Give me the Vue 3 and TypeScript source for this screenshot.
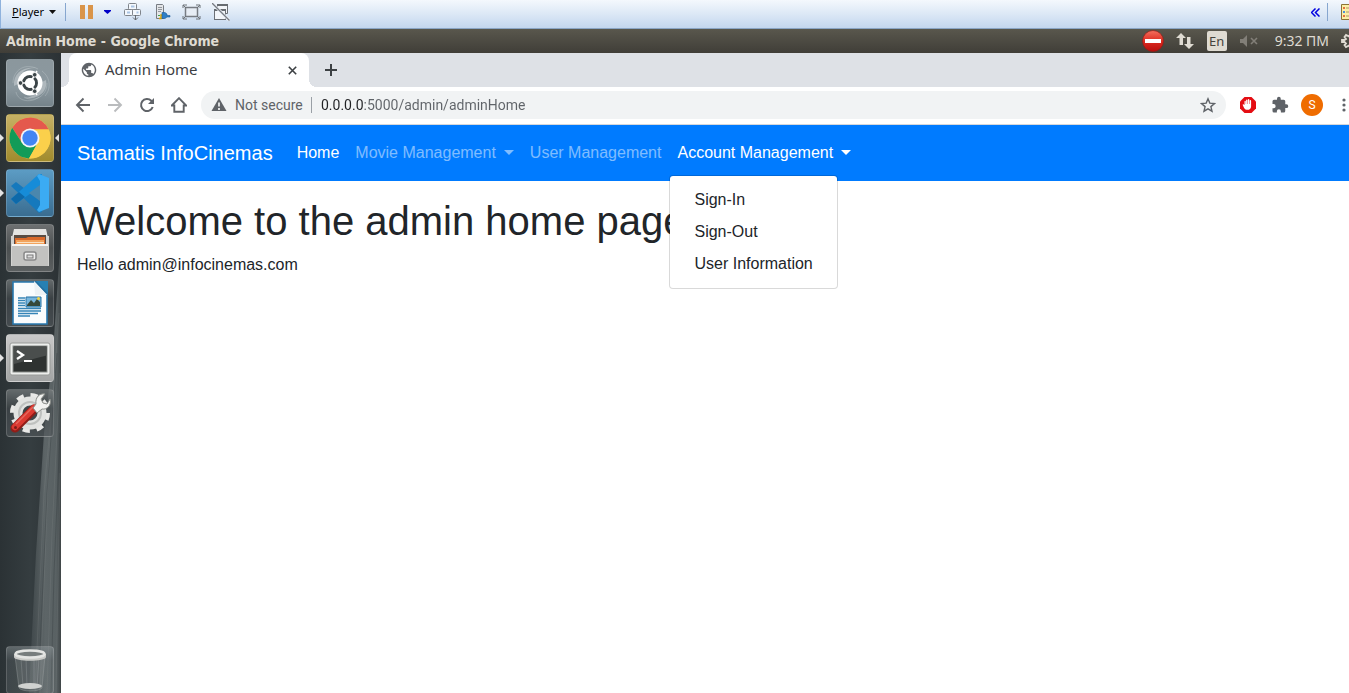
<script setup lang="ts">
import { ref } from 'vue'

interface NavEntry {
  label: string
  caret: boolean
  active: boolean
  menu?: string[]
}

const navEntries: NavEntry[] = [
  { label: 'Home', caret: false, active: true },
  { label: 'Movie Management', caret: true, active: false },
  { label: 'User Management', caret: false, active: false },
  { label: 'Account Management', caret: true, active: true, menu: ['Sign-In', 'Sign-Out', 'User Information'] },
]
const openMenu = ref('Account Management')
const address = ref('0.0.0.0:5000/admin/adminHome')

function toggle(entry: NavEntry) {
  openMenu.value = openMenu.value === entry.label ? '' : entry.label
}
</script>

<template>
  <div class="screen">
    <header class="vm-bar">
      <button class="player"><span><u>P</u>layer</span>
        <svg width="7" height="4" viewBox="0 0 7 4"><path d="M0 0h7L3.500 4z" fill="#111" /></svg>
      </button>
      <i class="vm-sep"></i>
      <button class="vm-btn pause" aria-label="Suspend">
        <svg width="14" height="14" viewBox="0 0 14 14"><path d="M0 0h5v14H0zM8 0h5v14H8z" fill="#d9944a" /></svg>
      </button>
      <button class="vm-btn pause-menu" aria-label="Power options">
        <svg width="7" height="4" viewBox="0 0 7 4"><path d="M0 0h7v1L3.500 4 0 1z" fill="#0000c8" /></svg>
      </button>
      <button class="vm-btn" aria-label="Send keys">
        <svg width="18" height="18" viewBox="0 0 18 18" fill="#f4f8fd" stroke="#7f848b">
          <rect x="4.500" y=".5" width="8" height="6" rx="1" /><rect x=".5" y="6.500" width="8" height="6" rx="1" /><rect x="8.500" y="6.500" width="8" height="6" rx="1" />
          <path d="M7 3.500h3.500M3 9.500h3M12.500 9.500h2" stroke="#a9c4e4" stroke-width="2" />
          <path d="M11.500 12v5M9 14.500l2.500 2.500 2.500-2.500" fill="none" stroke="#666a70" />
        </svg>
      </button>
      <button class="vm-btn" aria-label="Devices">
        <svg width="18" height="18" viewBox="0 0 18 18">
          <path d="M3.500 1.500h6l1 1v13h-7z" fill="#e3e5e8" stroke="#777c83" /><path d="M5 4.500h4M5 6.500h4M5 8.500h3" stroke="#92979d" /><path d="M5 12.500h2" stroke="#3fa34d" />
          <path d="M6 15.500h2v-3.500h3" fill="none" stroke="#d9a400" stroke-width="1.500" /><path d="M9 9.500h3l2 1.500v1.500h3v1.500h-3L12 15.500H9z" fill="#2f7fc6" stroke="#1b5b99" stroke-width=".6" />
        </svg>
      </button>
      <button class="vm-btn" aria-label="Full screen">
        <svg width="19" height="16" viewBox="0 0 19 16" fill="none" stroke="#6d7278">
          <rect x="3.500" y="3.500" width="12" height="9" fill="#e7edf5" stroke="#777c83" stroke-width="1.500" /><path d="M1 4V1h4M1 1l3 3M14 1h4v3M18 1l-3 3M1 12v3h4M1 15l3-3M14 15h4v-3M18 15l-3-3" />
        </svg>
      </button>
      <button class="vm-btn" aria-label="Unity mode">
        <svg width="18" height="18" viewBox="0 0 18 18">
          <path d="M5.500 6V1.500h10v9h-2" fill="#f2f5f9" stroke="#6b6f75" /><path d="M5 2h11" stroke="#666b71" stroke-width="2" />
          <rect x="2.500" y="6.500" width="11" height="10" fill="#f2f5f9" stroke="#6b6f75" /><path d="M2 7h12" stroke="#666b71" stroke-width="2" />
          <path d="M0 0l18 18" stroke="#eef3fa" stroke-width="3" /><path d="M0 0l17.500 17.500" stroke="#777c83" stroke-width="1.300" />
        </svg>
      </button>
      <span class="grow"></span>
      <button class="vm-btn collapse" aria-label="Collapse toolbar">
        <svg width="9" height="9" viewBox="0 0 9 9"><path d="M4.500.5l-4 4 4 4M8.500.5l-4 4 4 4" fill="none" stroke="#0000e0" stroke-width="1.500" /></svg>
      </button>
      <i class="vm-sep"></i>
      <svg class="note" width="8" height="16" viewBox="0 0 8 16"><path d="M.5.5H9v15H.5z" fill="#fbefa6" stroke="#8c7433" /><path d="M2 3h2v2H2z" fill="#e5703c" /><path d="M2 7h2v2H2z" fill="#4b92d6" /><path d="M2 11h2v2H2z" fill="#e5703c" /><path d="M5 4h3M5 8h3M5 12h3" stroke="#a99a67" /></svg>
    </header>

    <div class="title-bar">
      <strong>Admin Home - Google Chrome</strong>
      <span class="grow"></span>
      <svg class="stop" width="22" height="22" viewBox="0 0 22 22">
        <defs><linearGradient id="stopRed" x2="0" y2="1"><stop stop-color="#f4705e" /><stop offset=".5" stop-color="#dc2b20" /><stop offset="1" stop-color="#b90d0d" /></linearGradient></defs>
        <circle cx="11" cy="11" r="10.500" fill="url(#stopRed)" stroke="#8f1c15" stroke-width=".7" /><path d="M3 9h16v4H3z" fill="#fff" />
      </svg>
      <svg class="net" width="18" height="18" viewBox="0 0 18 18" fill="#dfdbd2"><path d="M5 1l5 5H7v7H3.500V6H0zM13 17l-5-5h3V5h3.500v7H18z" /></svg>
      <span class="lang">En</span>
      <svg class="mute" width="18" height="12" viewBox="0 0 18 12"><path d="M0 4h3l4-4v12L3 8H0z" fill="#827f78" /><path d="M11 3l6 6M17 3l-6 6" stroke="#827f78" stroke-width="1.600" /></svg>
      <time>9:32 ΠΜ</time>
      <svg class="gear" width="8" height="16" viewBox="0 0 8 16"><path d="M9 1.500l-1 2-3-1.500-1.500 2L5 6 3.500 7H1v2h2.500L5 10.500 3.500 12 5 14l3-1.500 1 2" fill="none" stroke="#dfdbd2" stroke-width="1.800" /></svg>
    </div>

    <div class="desktop">
      <nav class="launcher" aria-label="Launcher">
        <svg class="wallpaper" viewBox="0 0 61 640" preserveAspectRatio="none">
          <defs>
            <linearGradient id="streak"><stop stop-color="#4a5255" stop-opacity=".5" /><stop offset=".5" stop-color="#5d6567" /><stop offset=".85" stop-color="#596163" /><stop offset="1" stop-color="#3f4547" /></linearGradient>
          </defs>
          <path d="M61 180L53 300 44 380 36 500 29 640H61z" fill="url(#streak)" />
          <path d="M59 260L49 400 40 640M60 320L52 480 47 640M60 420L56 640M55 320L44 440 35 640" fill="none" stroke="#8a9193" stroke-opacity=".2" />
          <path d="M57 300L47 440 38 640M60 380L54 520 51 640" fill="none" stroke="#2e3437" stroke-opacity=".3" />
        </svg>
        <button class="tile dash" aria-label="Search your computer">
          <svg viewBox="0 0 48 48">
            <g fill="none" stroke="#c5cdd1" stroke-opacity=".35"><path d="M7 24C7 12 18 3 32 10M41 24c0 13-12 20-23 14M10 33C12 43 26 44 33 38M36 12c9 7 9 18 3 25" /></g>
            <path d="M8 27C7 14 17 7 31 9 19 8 12 15 12 25zM40 21c2 13-9 20-22 18 11-1 18-7 18-16z" fill="#dbe0e2" opacity=".45" />
            <circle cx="24" cy="24" r="12.500" fill="#fff" /><circle cx="24" cy="24" r="6.500" fill="none" stroke="#3c4548" stroke-width="3" />
            <path d="M24 24L12 24M24 24l7-12M24 24l7 12" stroke="#fff" stroke-width="1.500" />
            <g fill="#3c4548" stroke="#fff" stroke-width=".8"><circle cx="14.500" cy="24" r="2.300" /><circle cx="28.700" cy="15.800" r="2.300" /><circle cx="28.700" cy="32.200" r="2.300" /></g><circle cx="24" cy="24" r="4.800" fill="#fff" />
          </svg>
        </button>
        <button class="tile chrome running focused" aria-label="Google Chrome">
          <svg viewBox="0 0 48 48">
            <circle cx="24" cy="24" r="20.500" fill="#fbd04b" />
            <path d="M6.200 13.800A20.500 20.500 0 0 1 42.700 15.500H24L15.500 28z" fill="#e4594d" /><path d="M6.200 13.800A20.500 20.500 0 0 0 23 44.500l9-15.500-8 4-8.500-5z" fill="#129b58" />
            <path d="M24 15.500h18.700A20.500 20.500 0 0 1 23 44.500L31.500 29z" fill="#fbd04b" />
            <circle cx="24" cy="24" r="9.500" fill="#f5f5f5" /><circle cx="24" cy="24" r="7.700" fill="#4285f4" />
          </svg>
        </button>
        <button class="tile code running" aria-label="Visual Studio Code">
          <svg viewBox="0 0 48 48">
            <path d="M5 17l5-4 26 20v10l-3 1z" fill="#1579bd" /><path d="M5 30l5 5 26-19V5h-3z" fill="#168cd8" /><path d="M33 5l10 4v30l-10 4-2-2 3-5V12l-3-5z" fill="#3babf3" /><path d="M34 16v16L23 24z" fill="#4a87ad" /><path d="M5 30l5 5 9-7-6-5z" fill="#0e69a9" />
          </svg>
        </button>
        <button class="tile files" aria-label="Files">
          <svg viewBox="0 0 48 48">
            <path d="M8 5h32l3 13H5z" fill="#e4e4e2" /><path d="M5 12h38v30H5z" fill="#d2d2d0" /><path d="M8 11h32v9H8z" fill="#594c43" />
            <path d="M9 14h11l2-1h17v8H9z" fill="#d96a2b" /><path d="M10 16h28v5H10z" fill="#f2a35c" /><path d="M11 18h27v1H11z" fill="#f9dfbe" />
            <path d="M6 20h36v22H6z" fill="#c2c2c0" /><path d="M6 20h36v2H6z" fill="#f5f5f3" /><rect x="18" y="28" width="12" height="8" rx="2" fill="#eee" stroke="#888" stroke-width="1.500" /><rect x="21" y="31" width="6" height="3" fill="#ddd" stroke="#777" />
          </svg>
        </button>
        <button class="tile writer" aria-label="LibreOffice Writer">
          <svg viewBox="0 0 48 48">
            <path d="M7 3h23l11 12v30H7z" fill="#fafcfd" stroke="#2878ae" stroke-width="1.600" /><path d="M28 2h14v14z" fill="#256f9f" /><path d="M28 2l13 14H29z" fill="#edf2f5" /><path d="M30 2h12v12z" fill="#2780b3" />
            <path d="M12 19h7M12 21.500h7M12 24h7M12 26.500h7M12 29.500h23M12 32h23M12 34.500h20M12 37h12" stroke="#3584b7" stroke-width="1.400" />
            <path d="M20 18h15v10H20z" fill="#77b5dc" stroke="#2673a5" /><path d="M21 26l4-5 3 3 3-4 3 3v4H21z" fill="#34483b" /><circle cx="32.500" cy="19.500" r="1.500" fill="#f1d342" />
          </svg>
        </button>
        <button class="tile terminal running" aria-label="Terminal">
          <svg viewBox="0 0 48 48">
            <rect x="4" y="9" width="40" height="32" rx="2" fill="#eceeec" stroke="#989a98" /><rect x="7" y="12" width="34" height="26" fill="#2e3231" stroke="#888c89" /><path d="M8 12.500h32.500v9L8 30z" fill="#4a4e4d" />
            <path d="M11 17l6 4-6 4" fill="none" stroke="#fff" stroke-width="2.300" /><path d="M18 27h8" stroke="#fff" stroke-width="2" />
          </svg>
        </button>
        <button class="tile settings" aria-label="System Settings">
          <svg viewBox="0 0 48 48">
            <circle cx="24" cy="24" r="17.500" fill="none" stroke="#e9e9e7" stroke-width="5" stroke-dasharray="7 6.740" /><circle cx="24" cy="24" r="12" fill="none" stroke="#e2e3e1" stroke-width="9" /><circle cx="24" cy="24" r="11" fill="none" stroke="#bfc1bf" stroke-width="2" />
            <path d="M9 39L28 20" stroke="#901d18" stroke-width="9" stroke-linecap="round" /><path d="M9 38L28 19" stroke="#db3931" stroke-width="6.500" stroke-linecap="round" /><path d="M10 35L27 18" stroke="#e8665c" stroke-width="1.500" />
            <path d="M27 19l3-4c-1-6 3-11 9-10l-4 5 2 4 4 1 3-5c2 6-3 11-8 10l-5 4z" fill="#f2f2f0" stroke="#8a8d89" /><circle cx="9.500" cy="38.500" r="1.500" fill="#7d1c17" />
          </svg>
        </button>
        <span class="grow"></span>
        <button class="tile trash" aria-label="Trash">
          <svg viewBox="0 0 48 48">
            <path d="M9 10l4 32c3 4 20 4 23 0l3-32z" fill="#a8afaf" fill-opacity=".2" stroke="#a9afae" stroke-opacity=".35" /><path d="M15 13l2 27M20 13l1 27M28 13v27M33 13l-2 27" stroke="#cfd3d2" stroke-opacity=".2" />
            <ellipse cx="24" cy="40" rx="12" ry="3" fill="#d0d2d0" /><path d="M8 8v3c0 5 32 5 32 0V8z" fill="#c9cac7" /><ellipse cx="24" cy="8" rx="14.500" ry="3.500" fill="#777d7d" stroke="#e4e5e3" stroke-width="2.500" />
          </svg>
        </button>
      </nav>

      <div class="browser">
        <div class="tabs">
          <div class="tab">
            <svg width="16" height="16" viewBox="1 1 22 22"><path d="M12 2C6.480 2 2 6.480 2 12s4.480 10 10 10 10-4.480 10-10S17.520 2 12 2zm-1 17.930c-3.950-.49-7-3.850-7-7.930 0-.62.080-1.210.21-1.790L9 15v1c0 1.100.9 2 2 2v1.930zm6.900-2.540c-.26-.81-1-1.390-1.900-1.390h-1v-3c0-.55-.45-1-1-1H8v-2h2c.55 0 1-.45 1-1V7h2c1.100 0 2-.9 2-2v-.41c2.930 1.190 5 4.060 5 7.410 0 2.080-.8 3.970-2.100 5.390z" fill="#5f6368" /></svg>
            <span>Admin Home</span>
            <button aria-label="Close tab"><svg width="9" height="9" viewBox="0 0 9 9"><path d="M.8.8l7.400 7.400M8.200.8L.8 8.200" stroke="#3c4043" stroke-width="1.600" /></svg></button>
          </div>
          <button class="new-tab" aria-label="New tab"><svg width="12" height="12" viewBox="0 0 12 12"><path d="M6 0v12M0 6h12" stroke="#3c4043" stroke-width="2" /></svg></button>
        </div>

        <div class="toolbar">
          <button aria-label="Back"><svg width="16" height="16" viewBox="0 0 16 16"><path d="M15 8H2M8.500 1.500L2 8l6.500 6.500" fill="none" stroke="#5f6368" stroke-width="1.900" /></svg></button>
          <button aria-label="Forward"><svg width="16" height="16" viewBox="0 0 16 16"><path d="M1 8h13M7.500 1.500L14 8l-6.500 6.500" fill="none" stroke="#babcbe" stroke-width="1.900" /></svg></button>
          <button aria-label="Reload"><svg width="16" height="16" viewBox="0 0 16 16"><path d="M13.700 10A6 6 0 1 1 12.300 3.800L14 5.500" fill="none" stroke="#5f6368" stroke-width="2" /><path d="M15 1v6H9z" fill="#5f6368" /></svg></button>
          <button aria-label="Home page"><svg width="16" height="16" viewBox="0 0 16 16"><path d="M.8 8.500L8 1.200l7.200 7.300h-2.500v6.300H3.300V8.500z" fill="none" stroke="#5f6368" stroke-width="1.900" /></svg></button>
          <div class="omnibox">
            <svg width="16" height="16" viewBox="0 0 16 16"><path d="M8 1l7.500 13H.5z" fill="#5f6368" /><path d="M8 5.500v4M8 11v2" stroke="#f1f3f4" stroke-width="1.700" /></svg>
            <span class="security">Not secure</span>
            <i></i>
            <input v-model="address" type="text" aria-label="Address" spellcheck="false">
            <button aria-label="Bookmark"><svg width="16" height="16" viewBox="0 0 16 16"><path d="M8 1.800l1.800 4.300 4.700.4-3.600 3.100 1.100 4.600L8 11.800l-4 2.400 1.100-4.600-3.600-3.100 4.700-.4z" fill="none" stroke="#5f6368" stroke-width="1.400" /></svg></button>
          </div>
          <button class="ext" aria-label="Ad blocker"><svg width="18" height="18" viewBox="0 0 18 18"><path d="M5.500 1h7L17 5.500v7L12.500 17h-7L1 12.500v-7z" fill="#e40d13" /><path d="M5.500 9V5.500c0-1 1.300-1 1.300 0V8h.3V4.300c0-1 1.400-1 1.400 0V8h.4V3.800c0-1 1.400-1 1.400 0V8h.4V4.800c0-1 1.400-1 1.400 0v5.700c0 4-5.500 4.300-7 1.500L3.700 9c-.3-1 .9-1.300 1.800 0z" fill="#fff" /></svg></button>
          <button class="ext" aria-label="Extensions"><svg width="18" height="18" viewBox="0 0 24 24"><path d="M20.500 11H19V7a2 2 0 0 0-2-2h-4V3.500a2.500 2.500 0 0 0-5 0V5H4a2 2 0 0 0-2 2v3.800h1.500a2.700 2.700 0 0 1 0 5.400H2V20a2 2 0 0 0 2 2h3.800v-1.500a2.700 2.700 0 0 1 5.400 0V22H17a2 2 0 0 0 2-2v-4h1.500a2.500 2.500 0 0 0 0-5z" fill="#5f6368" /></svg></button>
          <button class="profile" aria-label="Profile"><span class="avatar">S</span></button>
          <button class="dots" aria-label="Menu"><svg width="4" height="14" viewBox="0 0 4 14" fill="#5f6368"><circle cx="2" cy="2" r="1.600" /><circle cx="2" cy="7" r="1.600" /><circle cx="2" cy="12" r="1.600" /></svg></button>
        </div>

        <div class="page">
          <nav class="navbar" aria-label="Main">
            <a class="brand" href="#">Stamatis InfoCinemas</a>
            <ul>
              <li v-for="entry in navEntries" :key="entry.label">
                <a href="#" class="nav-link" :class="{ active: entry.active, caret: entry.caret }" @click.prevent="toggle(entry)">{{ entry.label }}</a>
                <div v-if="entry.menu && openMenu === entry.label" class="dropdown">
                  <a v-for="item in entry.menu" :key="item" href="#">{{ item }}</a>
                </div>
              </li>
            </ul>
          </nav>
          <main>
            <h1>Welcome to the admin home page</h1>
            <p>Hello admin@infocinemas.com</p>
          </main>
        </div>
      </div>
    </div>
  </div>
</template>

<style>
body { margin: 0; }
</style>

<style scoped>
* { box-sizing: border-box; }
button { border: 0; padding: 0; background: none; font: inherit; color: inherit; display: flex; align-items: center; justify-content: center; }
svg { display: block; flex: none; }
a { text-decoration: none; }
.grow { flex: 1; }
.screen { height: 100vh; display: flex; flex-direction: column; overflow: hidden; font-family: "Noto Sans", sans-serif; }

.vm-bar { flex: none; height: 29px; display: flex; align-items: center; padding: 0 0 4px 11px; background: linear-gradient(#f4f8fd, #dce8f6 50%, #c3d6ee); border-left: 1px solid #8fb2dd; border-bottom: 1px solid #8aa5c5; overflow: hidden; }
.player { font-size: 11px; color: #000; gap: 5px; margin-right: 9px; }
.player span { line-height: 16px; }
.vm-sep { width: 1px; height: 18px; background: #86a6cf; flex: none; }
.vm-btn { margin-right: 11px; }
.pause { margin-left: 14px; margin-right: 10px; }
.pause-menu { margin-right: 13px; }
.collapse { margin-right: 7px; }
.note { margin-left: 13px; }

.title-bar { flex: none; height: 24px; display: flex; align-items: center; padding-left: 6px; background: linear-gradient(#59574d, #403e38); color: #dfdbd2; font-size: 14px; overflow: hidden; }
.title-bar strong { font-family: "DejaVu Sans Condensed", "DejaVu Sans", sans-serif; font-size: 14px; line-height: 20px; }
.title-bar time { line-height: 20px; padding-bottom: 1px; }
.stop { margin-right: 12px; }
.net { margin-right: 13px; }
.lang { width: 20px; height: 20px; border-radius: 2px; background: #dfdbd2; color: #45433d; font-size: 13px; line-height: 20px; text-align: center; margin-right: 13px; }
.mute { margin-right: 17px; }
.gear { margin-left: 12px; }

.desktop { flex: 1; min-height: 0; display: flex; }
.launcher { position: relative; flex: none; width: 61px; display: flex; flex-direction: column; align-items: center; gap: 7px; padding: 6px 1px 0 0; overflow: hidden; background: linear-gradient(90deg, #2b3235, #353d40 50%, #2c3235); }
.wallpaper { position: absolute; inset: 0; width: 100%; height: 100%; }
.tile { position: relative; flex: none; width: 48px; height: 48px; border-radius: 4px; border: 1px solid #ffffff28; background: linear-gradient(#7c8182b0, #43494ca0 40%, #53595ca0); }
.tile svg { width: 48px; height: 48px; }
.dash { background: linear-gradient(#8b979d, #8b989f 60%, #75838a); }
.chrome { background: linear-gradient(#c6b165, #a18b2d); }
.code { background: linear-gradient(#5c9cc4, #3a6d91); }
.terminal { background: linear-gradient(#c9c9c9, #a2a4a4); }
.files { background: linear-gradient(#6d7071, #4b4f50 50%, #5b5f60); }
.trash { margin-bottom: -1px; background: linear-gradient(#a0a8ab70, #a0a8ab28 30%); }
.running::before, .focused::after { content: ""; position: absolute; top: 19px; border: 4px solid transparent; }
.running::before { left: -7px; border-left-color: #e3e3e3; border-right-width: 0; }
.focused::after { right: -6px; border-right-color: #e3e3e3; border-left-width: 0; }

.browser { flex: 1; min-width: 0; display: flex; flex-direction: column; background: #fff; }
.tabs { flex: none; height: 34px; display: flex; background: #dee1e6; padding-left: 8px; }
.tab { position: relative; width: 240px; display: flex; align-items: center; padding: 0 12px; background: #fff; border-radius: 8px 8px 0 0; color: #3c4043; font-size: 15px; }
.tab::before, .tab::after { content: ""; position: absolute; bottom: 0; width: 8px; height: 8px; }
.tab::before { left: -8px; background: radial-gradient(circle at 0 0, transparent 8px, #fff 8px); }
.tab::after { right: -8px; background: radial-gradient(circle at 100% 0, transparent 8px, #fff 8px); }
.tab span { flex: 1; margin-left: 8px; line-height: 20px; padding-bottom: 2px; }
.new-tab { margin-left: 16px; }

.toolbar { flex: none; height: 38px; display: flex; align-items: center; border-bottom: 1px solid #d5d7db; padding: 0 0 1px 14px; color: #5f6368; font-family: Roboto, "Noto Sans", sans-serif; font-size: 14px; overflow: hidden; }
.toolbar > button { margin-right: 16px; }
.omnibox { flex: 1; min-width: 0; height: 28px; border-radius: 14px; background: #f1f3f4; display: flex; align-items: center; padding: 0 10px; margin-left: -2px; margin-right: 13px; }
.security { width: 68px; margin-left: 8px; white-space: nowrap; }
.omnibox i { width: 1px; height: 16px; background: #9aa0a6; margin: 0 9px 0 8px; }
.omnibox input { flex: 1; min-width: 0; border: 0; padding: 0; outline: 0; font: inherit; color: transparent; caret-color: #202124; background: linear-gradient(90deg, #202124 42px, #5f6368 42px); -webkit-background-clip: text; background-clip: text; }
.toolbar > .ext { margin-right: 14px; }
.toolbar > .ext:has(+ .profile) { margin-right: 12px; }
.toolbar > .profile { margin-right: 19px; }
.avatar { width: 22px; height: 22px; border-radius: 50%; background: #ef6c00; color: #fff; font-size: 12px; line-height: 22px; text-align: center; }
.toolbar > .dots { margin-right: 3px; }

.page { flex: 1; min-height: 0; font: 16px/24px "Liberation Sans", Arial, sans-serif; color: #212529; }
.navbar { height: 56px; display: flex; align-items: center; padding: 8px 16px; background: #007bff; }
.brand { color: #fff; font-size: 20px; line-height: 30px; margin-right: 16px; white-space: nowrap; }
.navbar ul { display: flex; list-style: none; margin: 0; padding: 0; }
.navbar li { position: relative; }
.nav-link { display: flex; align-items: center; padding: 8px; color: #ffffff80; white-space: nowrap; }
.nav-link.active { color: #fff; }
.caret::after { content: ""; margin-left: 8px; margin-bottom: 2px; border: 5px solid transparent; border-top-color: currentColor; border-bottom: 0; }
.dropdown { position: absolute; top: 100%; left: 0; min-width: 160px; margin-top: 2px; padding: 8px 0; background: #fff; background-clip: padding-box; border: 1px solid #00000026; border-radius: 4px; }
.dropdown a { display: block; padding: 4px 24px; color: #212529; white-space: nowrap; }
main { padding: 16px; }
h1 { margin: 0 0 8px; font-size: 40px; line-height: 48px; font-weight: 500; }
p { margin: 0; }
</style>
